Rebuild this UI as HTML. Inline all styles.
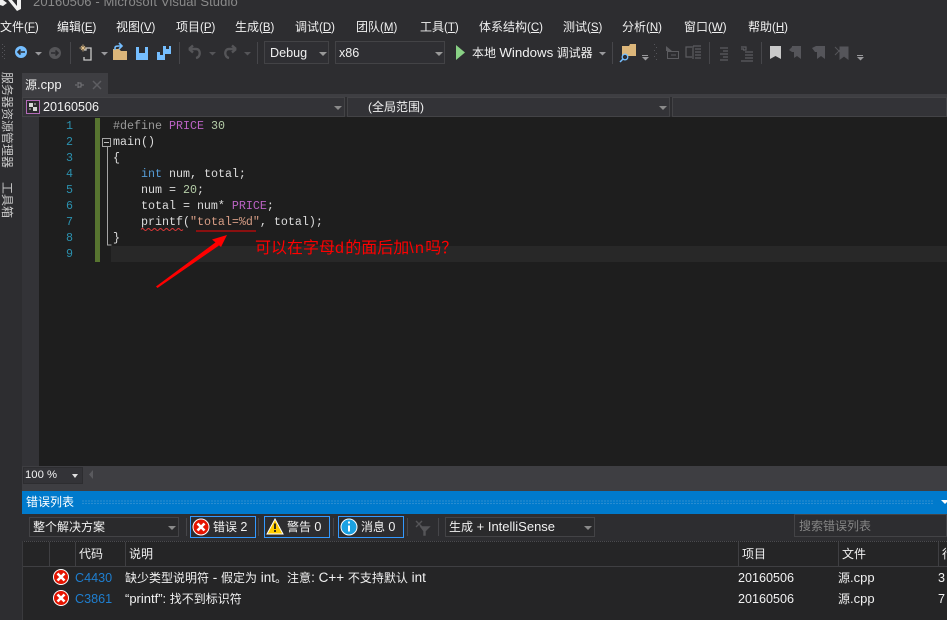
<!DOCTYPE html>
<html lang="zh"><head><meta charset="utf-8"><style>
html,body{margin:0;padding:0;background:#2d2d30}
#p{position:relative;width:947px;height:620px;overflow:hidden;background:#2d2d30;font:12px/16px "Liberation Sans","Noto Sans CJK SC",sans-serif;color:#f1f1f1}
#p div{position:absolute;white-space:nowrap}
i{font-style:normal;font-size:13px}
i.d{font-size:12.6px}
.m{top:18px;font-size:12px;line-height:18px;color:#f1f1f1}
.m i{font-size:11.5px}
.u{text-decoration:underline}
.c{font:11.67px/16px "Liberation Mono",monospace;color:#dcdcdc;left:113px;white-space:pre!important}
.n{font:11.67px/16px "Liberation Mono",monospace;color:#2b91af;left:59px;width:14px;text-align:right}
.bx{background:#333337;border:1px solid #434346;box-sizing:border-box}
.tri{width:0;height:0;border-left:4px solid transparent;border-right:4px solid transparent;border-top:4px solid #999}
.k{color:#569cd6}.g{color:#b5cea8}.pu{color:#bd63c5}.s{color:#d69d85}
.v{writing-mode:vertical-rl;text-orientation:sideways;font-size:12px;line-height:13px;color:#c8c8c8}
svg{position:absolute;overflow:visible}
</style></head><body><div id="p">

<!-- title -->
<svg style="left:0;top:0" width="22" height="12"><path d="M0 0h3l4 3-4 3-3-1zM8 0h4l5 6V0h4V9l-4 2z" fill="#f1f1f1"/></svg>
<div style="left:33px;top:-6px;font-size:13px;color:#8a8a8a;line-height:16px;letter-spacing:.1px">20160506 - Microsoft Visual Studio</div>

<!-- menu -->
<div class="m" style="left:0">文件<i>(<span class="u">F</span>)</i></div>
<div class="m" style="left:57px">编辑<i>(<span class="u">E</span>)</i></div>
<div class="m" style="left:116px">视图<i>(<span class="u">V</span>)</i></div>
<div class="m" style="left:176px">项目<i>(<span class="u">P</span>)</i></div>
<div class="m" style="left:235px">生成<i>(<span class="u">B</span>)</i></div>
<div class="m" style="left:295px">调试<i>(<span class="u">D</span>)</i></div>
<div class="m" style="left:356px">团队<i>(<span class="u">M</span>)</i></div>
<div class="m" style="left:420px">工具<i>(<span class="u">T</span>)</i></div>
<div class="m" style="left:479px">体系结构<i>(<span class="u">C</span>)</i></div>
<div class="m" style="left:563px">测试<i>(<span class="u">S</span>)</i></div>
<div class="m" style="left:622px">分析<i>(<span class="u">N</span>)</i></div>
<div class="m" style="left:684px">窗口<i>(<span class="u">W</span>)</i></div>
<div class="m" style="left:748px">帮助<i>(<span class="u">H</span>)</i></div>

<!-- toolbar -->
<svg style="left:0;top:40px" width="947" height="26">
<g fill="#55555a"><rect x="2" y="4" width="1" height="1"/><rect x="4" y="6" width="1" height="1"/><rect x="2" y="8" width="1" height="1"/><rect x="4" y="10" width="1" height="1"/><rect x="2" y="12" width="1" height="1"/><rect x="4" y="14" width="1" height="1"/><rect x="2" y="16" width="1" height="1"/><rect x="4" y="18" width="1" height="1"/></g>
<circle cx="21" cy="12" r="6" fill="#75beff"/><path d="M25 12H18M20.500 9.500L18 12L20.500 14.500" stroke="#2d2d30" stroke-width="1.600" fill="none"/>
<path d="M35 12h7l-3.500 3.500z" fill="#99999c"/>
<circle cx="55" cy="13" r="6" fill="#555558"/><path d="M51 13H58M55.500 10.500L58 13L55.500 15.500" stroke="#2d2d30" stroke-width="1.600" fill="none"/>
<rect x="70" y="2" width="1" height="22" fill="#46464a"/>
<path d="M84 10h2v-2h5v12h-7v-3" fill="none" stroke="#c8c8c8" stroke-width="1.300"/><path d="M79.500 8h7M83 4.500v7M81 6l4 4M85 6l-4 4" stroke="#e8c48a" stroke-width=".8"/>
<path d="M101 12h7l-3.500 3.500z" fill="#99999c"/>
<path d="M113 9h6l2 2h6v9h-14z" fill="#dcb67a"/><path d="M115 10v-2c0-2 2-2 4-2h2M119 3l3 3-3 3" fill="none" stroke="#75beff" stroke-width="1.600"/>
<path d="M136 7h12v13h-12z" fill="#75beff"/><rect x="139" y="7" width="6" height="6" fill="#2d2d30"/>
<path d="M157 12h8v8h-8z" fill="#75beff"/><rect x="160" y="12" width="3" height="3" fill="#2d2d30"/><path d="M163 6h8v8h-6v-2h-2z" fill="#75beff"/><rect x="166" y="6" width="3" height="3" fill="#2d2d30"/>
<rect x="179" y="2" width="1" height="22" fill="#46464a"/>
<path d="M189 9h7c5 0 5 8 0 9M189 9l4-3.500M189 9l4 3.500" fill="none" stroke="#555558" stroke-width="2.400"/>
<path d="M209 12h7l-3.500 3.500z" fill="#555558"/>
<path d="M236 9h-7c-5 0-5 8 0 9M236 9l-4-3.500M236 9l-4 3.500" fill="none" stroke="#555558" stroke-width="2.400"/>
<path d="M244 12h7l-3.500 3.500z" fill="#555558"/>
<rect x="257" y="2" width="1" height="22" fill="#46464a"/>
<path d="M456 5l9 7.500-9 7.500z" fill="#89d185"/>
<path d="M599 12h7l-3.500 3.500z" fill="#99999c"/>
<rect x="612" y="2" width="1" height="22" fill="#46464a"/>
<path d="M622 6h7l1-2h6v12h-14z" fill="#dcb67a"/><circle cx="625" cy="17" r="2.800" fill="#2d2d30" stroke="#75beff" stroke-width="1.300"/><path d="M623 19l-3 3" stroke="#75beff" stroke-width="1.500"/>
<rect x="642" y="15" width="6" height="1" fill="#99999c"/><path d="M642 17h7l-3.500 3.500z" fill="#99999c"/>
<g fill="#55555a"><rect x="654" y="4" width="1" height="1"/><rect x="656" y="7" width="1" height="1"/><rect x="654" y="10" width="1" height="1"/><rect x="656" y="13" width="1" height="1"/><rect x="654" y="16" width="1" height="1"/><rect x="656" y="19" width="1" height="1"/></g>
<path d="M666 6l6 5h-6z" fill="#5c5c60"/><rect x="667.500" y="11.500" width="11" height="7" fill="none" stroke="#5c5c60"/><path d="M671 15h5" stroke="#5c5c60"/>
<path d="M692 7h-6v10h6M693 6h8M695 9h6M695 12h6M695 15h6M695 18h6M693 6v13" fill="none" stroke="#5c5c60" stroke-width="1.200"/>
<rect x="709" y="2" width="1" height="22" fill="#46464a"/>
<path d="M720 8h8M723 11h5M720 14h8M723 17h5M720 20h8" stroke="#5c5c60" stroke-width="1.200"/>
<path d="M741 9h3M745 12h8M745 15h8M745 18h8M741 21h12M741 7h5v3h-3" fill="none" stroke="#5c5c60" stroke-width="1.200"/>
<rect x="761" y="2" width="1" height="22" fill="#46464a"/>
<path d="M770 6h11v13l-5.500-3-5.500 3z" fill="#c9c9c9"/>
<path d="M792 6h9v13l-4-3-3 2v-6h-2l-3-2 3-3z" fill="#55555a"/>
<path d="M812 8l4-2h9v13l-4-3-4 3v-7h-2z" fill="#55555a"/>
<path d="M835 7l8 8M843 7l-8 8M840 7h8v12l-4-3-4 3z" fill="#55555a" stroke="#55555a"/>
<rect x="857" y="15" width="6" height="1" fill="#99999c"/><path d="M857 17h7l-3.500 3.500z" fill="#99999c"/>
</svg>
<div class="bx" style="left:264px;top:41px;width:65px;height:23px;padding:3px 0 0 5px;line-height:16px;font-size:12.6px;background:#2f2f33">Debug</div>
<div class="tri" style="left:319px;top:52px"></div>
<div class="bx" style="left:335px;top:41px;width:110px;height:23px;padding:3px 0 0 3px;line-height:16px;font-size:12.6px;background:#2f2f33">x86</div>
<div class="tri" style="left:435px;top:52px"></div>
<div style="left:472px;top:45px">本地 <i style="font-size:13.3px">Windows</i> 调试器</div>

<!-- left strip -->
<div class="v" style="left:0;top:72px">服务器资源管理器</div>
<div class="v" style="left:0;top:182px">工具箱</div>

<!-- doc well -->
<div style="left:22px;top:73px;width:86px;height:21px;background:#3e3e42"></div>
<div style="left:25px;top:77px;line-height:16px;color:#f1f1f1">源<i>.cpp</i></div>
<svg style="left:73px;top:78px" width="32" height="14"><path d="M5 4v6M2 7h2M5 5h3v4h-3M8 7h3" stroke="#77777b" fill="none"/><path d="M20 3l8 8M28 3l-8 8" stroke="#5e5e62" stroke-width="1.500"/></svg>
<div style="left:22px;top:94px;width:925px;height:3px;background:#3e3e42"></div>

<!-- nav bar -->
<div style="left:22px;top:97px;width:925px;height:20px;background:#2d2d30"></div>
<div class="bx" style="left:22px;top:97px;width:323px;height:20px"></div>
<div class="bx" style="left:347px;top:97px;width:323px;height:20px"></div>
<div class="bx" style="left:672px;top:97px;width:275px;height:20px"></div>
<svg style="left:26px;top:100px" width="14" height="14"><rect x=".5" y=".5" width="13" height="13" fill="#2a2a2c" stroke="#b36bb8"/><path d="M3 3h4v4h-4zM7 7h4v4h-4z" fill="#d8d8d8"/><path d="M8 3h2v2h-2zM3 8h2v2h-2z" fill="#777"/></svg>
<div style="left:43px;top:99px;font-size:12.6px">20160506</div>
<div class="tri" style="left:334px;top:106px;border-top-color:#8a8a8a"></div>
<div style="left:368px;top:99px;"><i class="d" style="font-size:12px">(</i>全局范围<i style="font-size:12px">)</i></div>
<div class="tri" style="left:659px;top:106px;border-top-color:#8a8a8a"></div>

<!-- editor -->
<div style="left:22px;top:117px;width:925px;height:349px;background:#1e1e1e"></div>
<div style="left:22px;top:117px;width:17px;height:349px;background:#333337"></div>
<div style="left:95px;top:118px;width:5px;height:144px;background:#577430"></div>
<div style="left:111px;top:246px;width:836px;height:16px;background:#282828"></div>

<div class="n" style="top:118px">1</div><div class="n" style="top:134px">2</div><div class="n" style="top:150px">3</div><div class="n" style="top:166px">4</div><div class="n" style="top:182px">5</div><div class="n" style="top:198px">6</div><div class="n" style="top:214px">7</div><div class="n" style="top:230px">8</div><div class="n" style="top:246px">9</div>

<svg style="left:100px;top:136px" width="14" height="110"><rect x="2.500" y="2.500" width="8" height="8" fill="none" stroke="#a5a5a5"/><path d="M4 6.500h5" stroke="#c0c0c0"/><path d="M7.500 11v98h4" fill="none" stroke="#a5a5a5"/></svg>

<div class="c" style="top:118px;color:#9b9b9b">#define <span class="pu">PRICE</span> <span class="g">30</span></div>
<div class="c" style="top:134px">main()</div>
<div class="c" style="top:150px">{</div>
<div class="c" style="top:166px">    <span class="k">int</span> num, total;</div>
<div class="c" style="top:182px">    num = <span class="g">20</span>;</div>
<div class="c" style="top:198px">    total = num* <span class="pu">PRICE</span>;</div>
<div class="c" style="top:214px">    printf(<span class="s">"total=%d"</span>, total);</div>
<div class="c" style="top:230px">}</div>

<svg style="left:0;top:0" width="947" height="300">
<path d="M141 229.500q1.500-2 3 0t3 0 3 0 3 0 3 0 3 0 3 0 3 0 3 0 3 0 3 0 3 0 3 0 3 0" fill="none" stroke="#e03a3a"/>
<rect x="196" y="230" width="60" height="2" fill="#8a1010"/>
<path d="M156 286.500L157.500 288L219 245.500L216 242Z" fill="#f00"/>
<path d="M227 235L212 239.500L221 247Z" fill="#f00"/>
</svg>
<div style="left:255px;top:239px;font-size:16px;line-height:20px;color:#f00">可以在字母<span style="letter-spacing:1.300px">d</span>的面后加<span style="letter-spacing:1.300px">\n</span>吗？</div>

<!-- zoom bar -->
<div style="left:22px;top:466px;width:925px;height:25px;background:#3e3e42"></div>
<div style="left:23px;top:467px;width:58px;height:15px;background:#333337;border:1px solid #2d2d30;font-size:11.300px;line-height:15px;text-indent:1px">100 %</div>
<div class="tri" style="left:72px;top:474px;border-left-width:3.500px;border-right-width:3.500px;border-top-color:#e0e0e0"></div>
<svg style="left:88px;top:470px" width="8" height="10"><path d="M5 0v9l-4-4.500z" fill="#5a5a5e"/></svg>

<!-- error list -->
<div style="left:22px;top:491px;width:925px;height:23px;background:#007acc"></div>
<div style="left:26px;top:494px;line-height:17px;color:#fff">错误列表</div>
<div style="left:82px;top:500px;width:851px;height:5px;background-image:radial-gradient(circle at 1px 1px,#4f9fd6 0.6px,transparent 0.8px);background-size:3px 2.500px"></div>
<svg style="left:941px;top:500px" width="8" height="6"><path d="M0 0h8l-4 4z" fill="#fff"/></svg>

<div style="left:22px;top:514px;width:925px;height:27px;background:#2d2d30"></div>
<div class="bx" style="left:29px;top:517px;width:150px;height:20px;background:#2a2a2c;padding:1px 0 0 3px">整个解决方案</div>
<div class="tri" style="left:168px;top:526px;border-top-color:#8a8a8a"></div>

<div style="left:186px;top:518px;width:1px;height:18px;background:#46464a"></div>
<div style="left:190px;top:516px;width:66px;height:22px;box-sizing:border-box;border:1px solid #3399ff"></div>
<div style="left:264px;top:516px;width:66px;height:22px;box-sizing:border-box;border:1px solid #3399ff"></div>
<div style="left:338px;top:516px;width:66px;height:22px;box-sizing:border-box;border:1px solid #3399ff"></div>
<div style="left:258px;top:518px;width:1px;height:18px;background:#46464a"></div>
<div style="left:333px;top:518px;width:1px;height:18px;background:#46464a"></div>
<div style="left:407px;top:518px;width:1px;height:18px;background:#46464a"></div>
<div style="left:438px;top:518px;width:1px;height:18px;background:#46464a"></div>
<svg style="left:0;top:514px" width="460" height="26">
<circle cx="201" cy="13" r="8" fill="#e51400" stroke="#fff" stroke-width="1"/><path d="M197.500 9.500l7 7M204.500 9.500l-7 7" stroke="#fff" stroke-width="2.600"/>
<path d="M275 5l8 15h-16z" fill="#ffcc00" stroke="#fff" stroke-width="1"/><path d="M275 9.500v5.500M275 16v2" stroke="#1e1e1e" stroke-width="1.800"/>
<circle cx="349" cy="13" r="8" fill="#1ba1e2" stroke="#fff" stroke-width="1"/><path d="M349 11.500v6M349 7.500v2" stroke="#fff" stroke-width="2"/>
<path d="M416 7l6 6M422 7l-6 6M421 13h8l-4 4v4h-1v-4z" stroke="#555558" fill="#555558" stroke-width="1.400"/>
</svg>
<div style="left:213px;top:519px">错误 <i class="d">2</i></div>
<div style="left:287px;top:519px">警告 <i class="d">0</i></div>
<div style="left:361px;top:519px">消息 <i class="d">0</i></div>
<div class="bx" style="left:445px;top:517px;width:150px;height:20px;background:#2a2a2c;padding:1px 0 0 3px">生成<i> + IntelliSense</i></div>
<div class="tri" style="left:584px;top:526px;border-top-color:#8a8a8a"></div>
<div class="bx" style="left:794px;top:514px;width:153px;height:23px;padding:3px 0 0 4px;color:#858585;background:#2d2d30">搜索错误列表</div>

<div style="left:22px;top:541px;width:925px;height:79px;background:#252526"></div>
<div style="left:22px;top:541px;width:925px;height:1px;border-top:1px dotted #4a4a4e;box-sizing:border-box"></div>
<div style="left:22px;top:566px;width:925px;height:1px;background:#3f3f42"></div>
<div style="left:22px;top:541px;width:1px;height:79px;background:#3a3a3d"></div>
<div style="left:49px;top:542px;width:1px;height:24px;background:#3f3f42"></div>
<div style="left:75px;top:542px;width:1px;height:24px;background:#3f3f42"></div>
<div style="left:125px;top:542px;width:1px;height:24px;background:#3f3f42"></div>
<div style="left:738px;top:542px;width:1px;height:24px;background:#3f3f42"></div>
<div style="left:838px;top:542px;width:1px;height:24px;background:#3f3f42"></div>
<div style="left:938px;top:542px;width:1px;height:24px;background:#3f3f42"></div>
<div style="left:79px;top:546px">代码</div>
<div style="left:129px;top:546px">说明</div>
<div style="left:742px;top:546px">项目</div>
<div style="left:842px;top:546px">文件</div>
<div style="left:942px;top:546px">行</div>

<svg style="left:50px;top:567px" width="24" height="44">
<circle cx="11" cy="10" r="7.500" fill="#e51400" stroke="#fff"/><path d="M7.500 6.500l7 7M14.500 6.500l-7 7" stroke="#fff" stroke-width="2.600"/>
<circle cx="11" cy="31" r="7.500" fill="#e51400" stroke="#fff"/><path d="M7.500 27.500l7 7M14.500 27.500l-7 7" stroke="#fff" stroke-width="2.600"/>
</svg>
<div style="left:75px;top:570px;font-size:12.6px;color:#1f7fd0">C4430</div>
<div style="left:125px;top:570px">缺少类型说明符<i style="font-size:13.500px"> - </i>假定为<i style="font-size:13.500px"> int</i>。注意<i style="font-size:13.500px">: C++ </i>不支持默认<i style="font-size:13.500px"> int</i></div>
<div style="left:738px;top:570px;font-size:12.6px">20160506</div>
<div style="left:838px;top:570px">源<i>.cpp</i></div>
<div style="left:938px;top:570px;font-size:12.6px">3</div>
<div style="left:75px;top:591px;font-size:12.6px;color:#1f7fd0">C3861</div>
<div style="left:125px;top:591px"><i>“printf”: </i>找不到标识符</div>
<div style="left:738px;top:591px;font-size:12.6px">20160506</div>
<div style="left:838px;top:591px">源<i>.cpp</i></div>
<div style="left:938px;top:591px;font-size:12.6px">7</div>

</div></body></html>
